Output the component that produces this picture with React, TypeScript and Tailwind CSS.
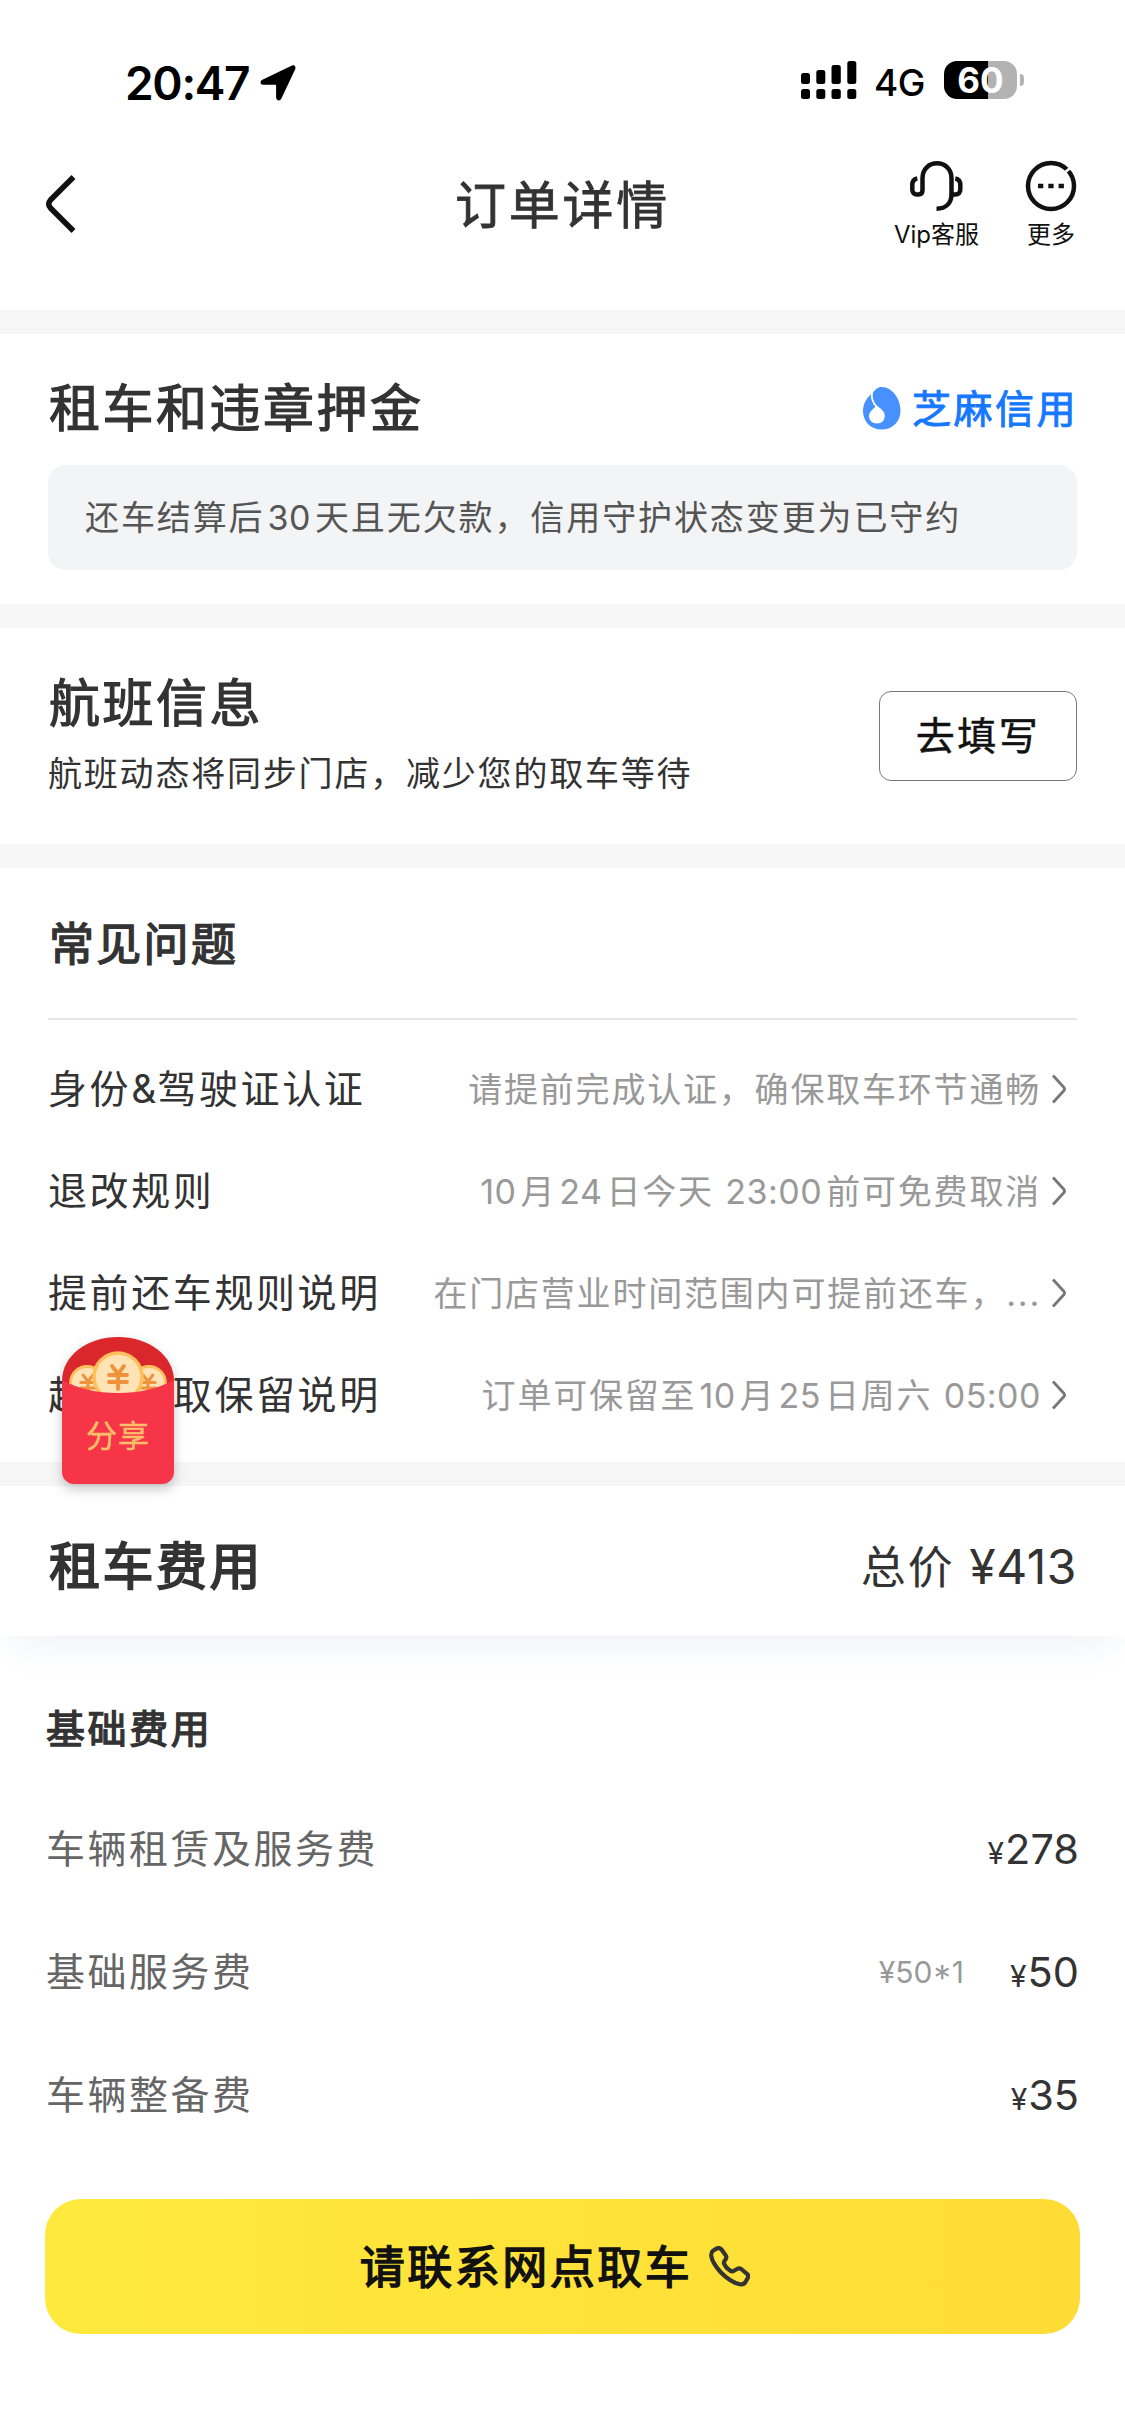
import type { ReactNode } from "react";

const faqs: { label: ReactNode; value: ReactNode }[] = [
  {
    label: (
      <>
        身份<span className="tracking-[1px]">&amp;</span>驾驶证认证
      </>
    ),
    value: "请提前完成认证，确保取车环节通畅",
  },
  {
    label: "退改规则",
    value: (
      <>
        <Num first>10</Num>月<Num>24</Num>日今天 <Num first>23:00</Num>前可免费取消
      </>
    ),
  },
  { label: "提前还车规则说明", value: "在门店营业时间范围内可提前还车，..." },
  {
    label: "超时未取保留说明",
    value: (
      <>
        订单可保留至<Num>10</Num>月<Num>25</Num>日周六 <Num first last>05:00</Num>
      </>
    ),
  },
];

const fees = [
  { name: "车辆租赁及服务费", detail: "", price: "278" },
  { name: "基础服务费", detail: "¥50*1", price: "50" },
  { name: "车辆整备费", detail: "", price: "35" },
];

// Latin digits inside Chinese text get a small gap on each side
function Num({ children, first, last }: { children: ReactNode; first?: boolean; last?: boolean }) {
  return (
    <span className={`tracking-[0.500px] ${first ? "" : "ml-[3px]"} ${last ? "" : "mr-1"}`}>{children}</span>
  );
}

function Divider() {
  return <div className="h-6 bg-[#f6f6f6]" />;
}

function StatusBar() {
  return (
    <div className="flex h-[120px] items-end justify-between pb-[15px] pl-[125px] pr-[101px] text-black">
      <div className="flex items-center gap-[11px]">
        <span className="text-[46px] font-semibold leading-[44px] tracking-[-1.300px]">20:47</span>
        <svg width="36" height="36" viewBox="0 0 36 36">
          <path
            d="M32 .6 2.4 14.8C-.6 16.4.2 19.8 3 19.8h12.400c.5 0 .7.2.7.7V32c0 3.800 3.800 4.600 5.300 1.500L35.200 4.200C36.200 1.600 34.400-.5 32 .6Z"
            fill="currentColor"
          />
        </svg>
      </div>
      <div className="mb-[3px] flex items-center">
        <svg width="56" height="38" viewBox="0 0 56 38">
          <g fill="currentColor">
            <rect x="0" y="12" width="9" height="11" rx="2.500" />
            <rect x="15.300" y="9" width="9" height="14" rx="2.500" />
            <rect x="30.500" y="4" width="9.300" height="19" rx="2.500" />
            <rect x="46.300" y="0" width="9" height="23" rx="2.500" />
            <rect x="0" y="28" width="9" height="10" rx="2.500" />
            <rect x="15.300" y="28" width="9" height="10" rx="2.500" />
            <rect x="30.500" y="28" width="9.300" height="10" rx="2.500" />
            <rect x="46.300" y="28" width="9" height="10" rx="2.500" />
          </g>
        </svg>
        <span className="ml-[17px] mt-[6px] w-[54px] text-[37px] font-medium leading-[38px] tracking-[-0.5px]">4G</span>
        <div className="ml-[16px] flex h-[38px] w-[73px] items-center justify-center rounded-[13px] bg-[linear-gradient(90deg,#000_60%,#b2b2b2_60%)] text-[35px] font-bold text-white">
          60
        </div>
        <div className="ml-[3px] h-3 w-1 rounded-r-full bg-[#b2b2b2]" />
      </div>
    </div>
  );
}

function NavBar() {
  return (
    <header className="grid h-[190px] grid-cols-[1fr_auto_1fr] items-start px-[45px] text-[#111]">
      <svg className="mt-[54px]" width="31" height="60" viewBox="0 0 31 60">
        <path d="M28.500 3 5.500 26Q2 30 5.500 34L28.500 57" fill="none" stroke="currentColor" strokeWidth="5.500" />
      </svg>
      <h1 className="mt-[56px] text-[51px] leading-[60px] tracking-[2.800px] text-[#333] [-webkit-text-stroke:0.800px]">
        订单详情
      </h1>
      <div className="mr-[3px] mt-10 flex justify-end gap-[46px] text-[24px] leading-[28px]">
        <div className="flex flex-col items-center gap-[9px]">
          <svg width="54" height="52" viewBox="0 0 54 52" fill="none" stroke="currentColor" strokeWidth="4.500">
            <path d="M27.500 48.700C37 48.700 42.500 43 42.500 34V18C42.500 9 36 3.300 28 3.300S13.500 9 13.500 18v12c0 3-1.500 4.500-4 4.500H8C5 34.500 3.300 32.500 3.300 29.500V25c0-3.500 2-6 5-6.500" />
            <path d="M42.500 34.500h4c3 0 4.800-2 4.800-5V25c0-3.500-2-6-5-6.500" />
          </svg>
          <span>Vip客服</span>
        </div>
        <div className="flex flex-col items-center gap-[9px]">
          <svg width="52" height="52" viewBox="0 0 52 52">
            <circle cx="26" cy="26" r="23" fill="none" stroke="currentColor" strokeWidth="4.500" />
            <path d="m38.500 13.500 8-6.500" stroke="#fff" strokeWidth="2.500" />
            <path d="M13 26h26" stroke="currentColor" strokeWidth="4.500" strokeDasharray="5.300 5" />
          </svg>
          <span>更多</span>
        </div>
      </div>
    </header>
  );
}

function DepositSection() {
  return (
    <section className="h-[270px] px-12 pt-[43px]">
      <div className="flex h-[62px] items-center justify-between">
        <h2 className="ml-px text-[51px] leading-none tracking-[2.500px] [-webkit-text-stroke:1.200px]">
          租车和违章押金
        </h2>
        <div className="flex items-center gap-[11px] text-[#1677ff]">
          <svg width="38" height="43" viewBox="0 0 38 43">
            <path
              d="M18.500 0C29.500 0 37.500 12 37.500 23.500S29.500 42.500 18.500 42.500 0 34.500 0 24C0 17.500 3 11.500 8 7.300 12 2.500 15 0 18.500 0Z"
              fill="#4791ff"
            />
            <path
              d="M13.500 18.500C11.500 21.500 6 24 6 29C6 33.500 9.500 36.500 14 36.500S21.800 33.500 21.800 28.500C21.800 24 17.500 21.500 13.500 18.500Z"
              fill="#fff"
            />
            <path d="M9.500 3.500C7.500 10 9.500 15.500 14 20.500" fill="none" stroke="#fff" strokeWidth="1.800" />
          </svg>
          <span className="mr-[-1px] text-[39px] leading-none tracking-[2.500px] [-webkit-text-stroke:0.900px]">
            芝麻信用
          </span>
        </div>
      </div>
      <p className="mt-[26px] flex h-[105px] items-center rounded-[18px] bg-[#f3f4f6] pl-[37px] text-[34px] tracking-[1.900px] text-[#555]">
        <span>
          还车结算后<Num>30</Num>天且无欠款，信用守护状态变更为已守约
        </span>
      </p>
    </section>
  );
}

function FlightSection() {
  return (
    <section className="flex h-[216px] items-start justify-between px-12">
      <div className="pt-[46px]">
        <h2 className="ml-px text-[51px] leading-[60px] tracking-[2.500px] [-webkit-text-stroke:1.200px]">航班信息</h2>
        <p className="mt-[15px] text-[34px] leading-[50px] tracking-[1.800px]">航班动态将同步门店，减少您的取车等待</p>
      </div>
      <button className="mt-[63px] h-[90px] w-[198px] rounded-[12px] border border-[#777] pt-px text-[39px] tracking-[2.500px] text-[#111] [-webkit-text-stroke:0.500px]">
        去填写
      </button>
    </section>
  );
}

function FaqSection() {
  return (
    <section className="h-[594px] px-12">
      <h2 className="flex h-[152px] items-center border-b-2 border-[#e6e6e6] pl-px pt-[3px] text-[45px] tracking-[2.300px] [-webkit-text-stroke:1.400px]">
        常见问题
      </h2>
      <ul className="pt-[18px]">
        {faqs.map((faq, i) => (
          <li key={i} className="flex h-[102px] items-center justify-between whitespace-nowrap">
            <span className="text-[39px] tracking-[2.600px]">{faq.label}</span>
            <span className="flex items-center gap-[10px] pr-[10px] text-[34px] tracking-[1.800px] text-[#999]">
              <span>{faq.value}</span>
              <svg width="16" height="30" viewBox="0 0 16 30">
                <path d="M2 1.500 13 13.500Q14.200 15 13 16.500L2 28.500" fill="none" stroke="#777" strokeWidth="2.800" />
              </svg>
            </span>
          </li>
        ))}
      </ul>
    </section>
  );
}

function FeeSection() {
  return (
    <section>
      <div className="flex h-[150px] items-center justify-between px-12 pt-[11px] shadow-[0_20px_36px_-14px_rgba(60,95,150,0.1)]">
        <h2 className="ml-px text-[51px] leading-none tracking-[2.500px] [-webkit-text-stroke:1.800px]">租车费用</h2>
        <span className="text-[45px] leading-none">
          <span className="mr-[2px] tracking-[2px]">总价</span>{" "}
          <span className="text-[48px] tracking-[0.500px]">¥413</span>
        </span>
      </div>
      <div className="px-[46px]">
        <h3 className="mt-[63px] text-[39px] leading-[60px] tracking-[2.600px] [-webkit-text-stroke:1.300px]">
          基础费用
        </h3>
        <ul className="pt-[29px]">
          {fees.map((fee) => (
            <li key={fee.name} className="flex h-[123px] items-center justify-between">
              <span className="text-[39px] tracking-[2.500px] text-[#666]">{fee.name}</span>
              <span className="flex items-center">
                <span className="mr-[46px] text-[30px] text-[#999]">{fee.detail}</span>
                <span>
                  <span className="mr-px text-[30px]">¥</span>
                  <span className="text-[41.500px]">{fee.price}</span>
                </span>
              </span>
            </li>
          ))}
        </ul>
      </div>
    </section>
  );
}

function ContactButton() {
  return (
    <div className="px-[45px] pt-[42px]">
      <button className="flex h-[135px] w-full items-center justify-center rounded-[36px] bg-gradient-to-r from-[#ffe93d] to-[#ffdc35] pr-[15px] text-[#111]">
        <span className="mr-[17px] mt-[2px] text-[45px] leading-none tracking-[2.500px] [-webkit-text-stroke:1.500px]">
          请联系网点取车
        </span>
        <svg width="41" height="41" viewBox="0 0 41 41" fill="none" stroke="#333" strokeWidth="4.200" strokeLinejoin="round">
          <path d="M4 4.700 7.500 2.600Q10.500 1.200 12.500 3.500L16.800 9.500Q18 11.500 16.500 13.500Q14.500 15.500 15 17.500Q16.500 21.500 21 24.500Q23 26 25 24.800L28.500 22.800Q30.500 22 32.200 23L38 27.800Q40 29.500 38.700 32L36.500 36Q34.500 39 30.700 38.200Q21 36 11.500 26Q3 16.500 2.200 9.500Q2 6.200 4 4.700Z" />
        </svg>
      </button>
    </div>
  );
}

function YuanMark({ x, y, scale }: { x: number; y: number; scale: number }) {
  return (
    <path
      d="M-6-11 0-3 6-11M-9-2H9M-9 5H9M0-3V12"
      transform={`translate(${x} ${y}) scale(${scale})`}
      fill="none"
      stroke="#f0913c"
      strokeWidth="3.800"
      strokeLinecap="round"
      strokeLinejoin="round"
    />
  );
}

function ShareEnvelope() {
  return (
    <div className="absolute left-[62px] top-[1337px] h-[147px] w-[112px] drop-shadow-[0_5px_6px_rgba(0,0,0,0.22)]">
      <svg width="112" height="147" viewBox="0 0 112 147">
        <path d="M0 44C0 18 26 0 56 0s56 18 56 44v20H0Z" fill="#d9272c" />
        <circle cx="25" cy="46" r="16.500" fill="#ffe3b5" stroke="#ffbf5c" strokeWidth="2.800" />
        <circle cx="87" cy="46" r="16.500" fill="#ffe3b5" stroke="#ffbf5c" strokeWidth="2.800" />
        <YuanMark x={26} y={47} scale={0.8} />
        <YuanMark x={86} y={47} scale={0.8} />
        <circle cx="56" cy="40" r="24" fill="#ffe3b5" stroke="#ffbf5c" strokeWidth="3.500" />
        <YuanMark x={56} y={40} scale={1} />
        <path d="M0 43Q24 56 56 56T112 43v92a12 12 0 0 1-12 12H12a12 12 0 0 1-12-12Z" fill="#f63548" />
      </svg>
      <span className="absolute inset-x-0 top-[79px] text-center text-[31px] leading-[40px] tracking-[1px] text-[#fdbf68] [-webkit-text-stroke:0.500px]">
        分享
      </span>
    </div>
  );
}

export default function App() {
  return (
    <main className="relative h-[2436px] w-[1125px] overflow-hidden bg-white font-['Inter','Noto_Sans_CJK_SC',sans-serif] text-[#333]">
      <StatusBar />
      <NavBar />
      <Divider />
      <DepositSection />
      <Divider />
      <FlightSection />
      <Divider />
      <FaqSection />
      <Divider />
      <FeeSection />
      <ContactButton />
      <ShareEnvelope />
    </main>
  );
}
